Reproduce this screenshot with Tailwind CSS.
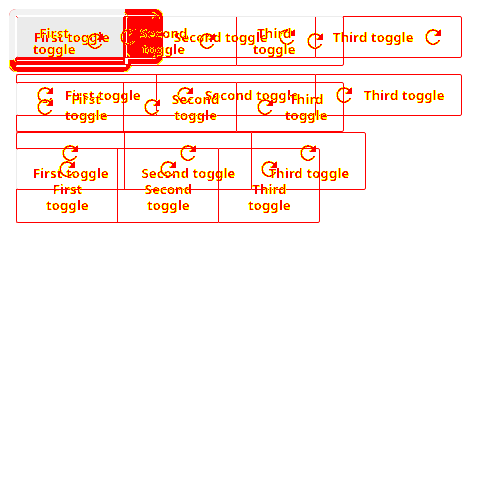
<!DOCTYPE html>
<html lang="en"><head><meta charset="utf-8"><title>Toggle groups</title>
<script src="https://cdn.jsdelivr.net/npm/@tailwindcss/browser@4"></script></head>
<body class="relative h-[500px] w-[500px] overflow-hidden bg-white">
<svg class="absolute h-0 w-0"><defs>
<filter id="edge" x="-5%" y="-20%" width="110%" height="140%" color-interpolation-filters="sRGB">
<feColorMatrix values="0 0 0 0 1  0 0 0 1 0  0 0 0 0 0  0 0 0 1 0"/>
<feComponentTransfer><feFuncG type="discrete" tableValues="1 1 1 1 1 1 1 1 1 1 1 1 1 0 0 0 0 0 0 0"/><feFuncA type="discrete" tableValues="0 0 1 1 1 1 1 1 1 1 1 1 1 1 1 1 1 1 1 1"/></feComponentTransfer>
</filter>
<symbol id="redo" viewBox="0 0 16 16"><path d="M13.1 3.2A7 7 0 1 0 14.4 11.2" fill="none" stroke="black" stroke-width="1.5"/><path d="M16 0V7H9.4V5.5H11L14.4 1.3Z" fill="black"/></symbol>
</defs></svg>

<!-- focus rings -->
<div class="absolute left-[9px] top-[9px] h-[55px] w-[154px] rounded-[7px] bg-[#f00]"></div>
<div class="absolute left-[9px] top-[57px] h-[15px] w-[122px] rounded-b-[7px] bg-[#f00]"></div>
<div class="absolute left-[9px] top-[9px] h-[51px] w-[116px] rounded-tl-[7px] bg-[#f2f2f2]"></div>
<div class="absolute left-[15px] top-[15px] h-[43px] w-[109px] rounded-tl-[3px] border-l-2 border-t-2 border-white bg-[#ebebeb]"></div>
<div class="absolute left-[124px] top-[15px] h-[44px] w-[33px] rounded-r-[3px] border-y border-r border-white bg-[#f00]"></div>
<div class="absolute left-[126px] top-[15px] h-[43px] w-px bg-white"></div>
<div class="absolute left-[15px] top-[58px] h-[7px] w-[110px] bg-[#f00]"></div>
<div class="absolute left-[17px] top-[60px] h-px w-[107px] bg-white"></div>
<div class="absolute left-[16px] top-[65px] h-[2px] w-[110px] bg-white"></div>
<div class="absolute left-[125px] top-[58px] h-[6px] w-[3px] bg-white"></div>
<!-- stepped ring corners -->
<svg class="absolute left-0 top-0 h-20 w-[170px]" shape-rendering="crispEdges" fill="none" stroke="#ff0" stroke-width="1">
<path d="M156.5 9.5h2l4 4v2M162.5 58v2l-4 4h-2M9.500 60v6l5 5.500h2M124 71.500h3l4-5v-2M124.500 12.500l3 3v2M152 12.500h2l5 4v2M152 18.500l3-3M127 53.500l3 3M152 58.500l3-3M16 61.500l-3-2"/>
</svg>

<div id="groups"></div>

<!-- segments of the outlines that stay neutral -->
<div class="absolute left-[17px] top-[16px] h-px w-[107px] bg-white"></div>
<div class="absolute left-[163px] top-[16px] h-px w-[180px] bg-[#ececec]"></div>
<div class="absolute left-[16px] top-[17px] h-[40px] w-px bg-white"></div>
<div class="absolute left-[16px] top-[83px] h-[32px] w-px bg-[#ececec]"></div>
<div class="absolute left-[16px] top-[149px] h-[40px] w-px bg-[#ececec]"></div>
<div class="absolute left-[17px] top-[65px] h-px w-[109px] bg-white"></div>

<script>
const kinds = {
 end:      {btn:'flex flex-row-reverse items-center justify-end gap-[11px] pl-[17px]', label:'whitespace-nowrap', sep:' '},
 endWrap:  {btn:'flex flex-row-reverse items-center justify-end gap-[11px] pl-4', label:'whitespace-pre text-center', sep:'\n'},
 start:    {btn:'flex flex-row items-center gap-3 pl-5', label:'whitespace-nowrap', sep:' '},
 startWrap:{btn:'flex flex-row items-center gap-3 pl-5', label:'whitespace-pre text-center', sep:'\n'},
 top:      {btn:'flex flex-col items-center gap-1 pt-3 pr-px', label:'whitespace-nowrap pl-0.5', sep:' '},
 topWrap:  {btn:'flex flex-col items-center gap-1 pt-3', label:'whitespace-pre text-center pl-px', sep:'\n'}
};
kinds.end.btn = 'flex flex-row-reverse items-center justify-between pl-[17px] pr-5';
const groups = [
 {kind:'end',y:16,h:42,cols:[140,159,147]},
 {kind:'endWrap',y:16,h:50,cols:[107,113,108]},
 {kind:'start',y:74,h:42,cols:[140,159,147]},
 {kind:'startWrap',y:82,h:50,cols:[107,113,108]},
 {kind:'top',y:132,h:58,cols:[108,127,115]},
 {kind:'topWrap',y:148,h:75,cols:[101,101,102]}
];
const names = ['First','Second','Third'];
document.getElementById('groups').innerHTML = groups.map(g => {
 const k = kinds[g.kind];
 const row = names.map((n,i) => {
  const edge = i===0 ? 'rounded-l-[2px]' : i===2 ? 'rounded-r-[2px] border-r' : '';
  return `<button class="shrink-0 border-y border-l border-[#f00] ${edge} ${k.btn}" style="width:${g.cols[i]}px;height:${g.h}px">`+
   `<svg class="size-4 shrink-0 [filter:url(#edge)]"><use href="#redo"/></svg>`+
   `<span class="block font-['Noto_Sans',sans-serif] text-[13px] font-semibold leading-4 tracking-[0.3px] text-black [filter:url(#edge)] ${k.label}">${n}${k.sep}toggle</span></button>`;
 }).join('');
 return `<div class="absolute left-4 flex" style="top:${g.y}px">${row}</div>`;
}).join('');
</script>
</body></html>
